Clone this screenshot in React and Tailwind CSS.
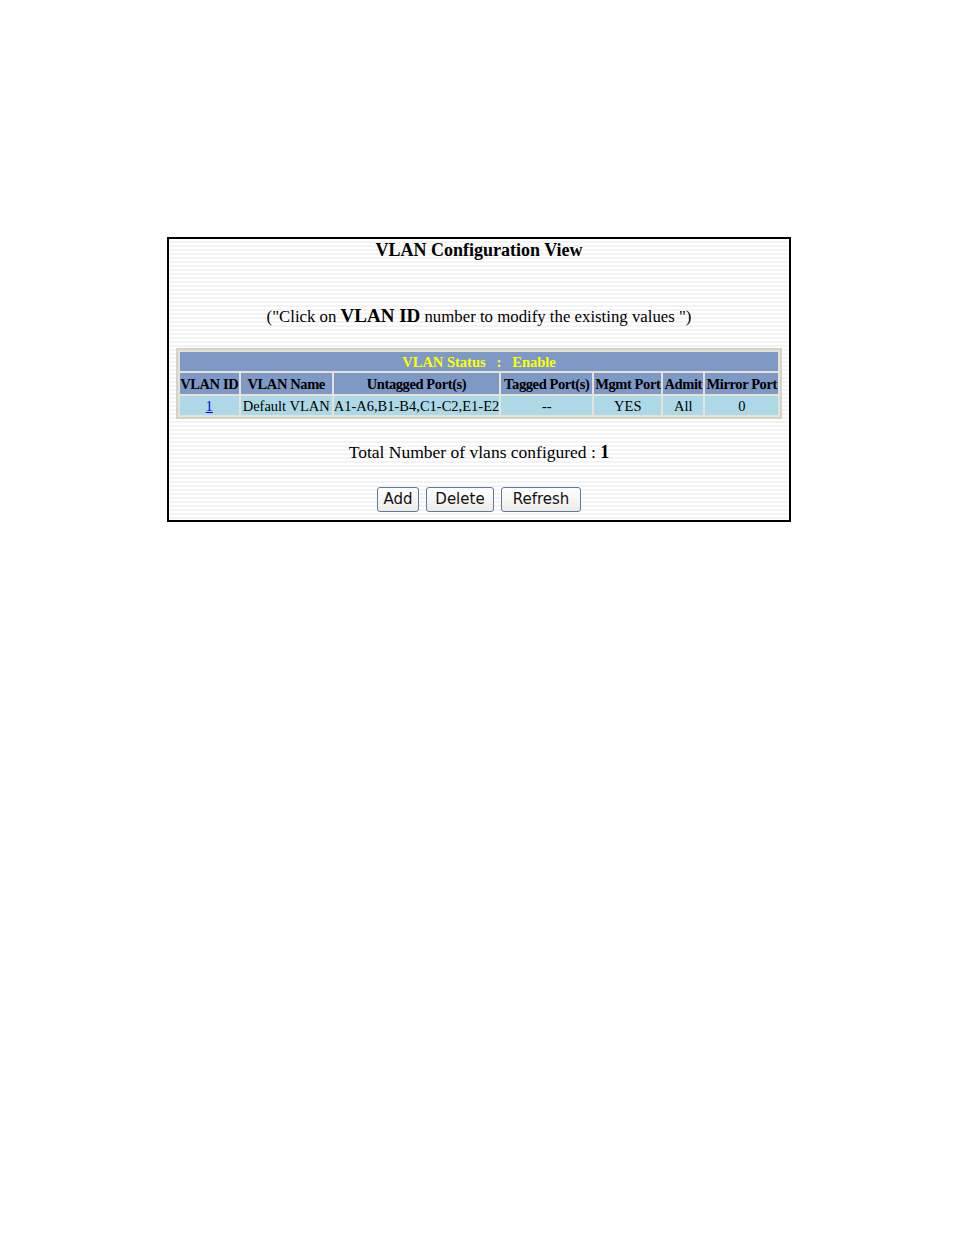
import React from "react";

const cols = [
  { name: "VLAN ID", w: "w-[59px]" },
  { name: "VLAN Name", w: "w-[91px]" },
  { name: "Untagged Port(s)", w: "w-[164px]" },
  { name: "Tagged Port(s)", w: "w-[91px]" },
  { name: "Mgmt Port", w: "w-[67px]" },
  { name: "Admit", w: "w-[40px]" },
  { name: "Mirror Port", w: "w-[73px]" },
];

function Btn({ children, w }) {
  return (
    <button
      className={`h-[25px] ${w} rounded-[3px] border border-[#5b7ba3] bg-[linear-gradient(to_bottom,#ffffff,#ecebe6)] text-[15px] text-[#111] font-['DejaVu_Sans',sans-serif] leading-none`}
    >
      {children}
    </button>
  );
}

export default function App() {
  return (
    <div className="min-h-[1235px] bg-white pt-[237px] pl-[167px] font-['Liberation_Serif',serif] text-black">
      <div className="w-[624px] h-[285px] border-2 border-black bg-[repeating-linear-gradient(to_bottom,#ffffff_0px,#ffffff_2px,#f3f3f3_2px,#f3f3f3_4px)] flex flex-col items-center">
        <div className="mt-[0px] text-[18px] font-bold leading-[22px]">VLAN Configuration View</div>
        <div className="mt-[44px] text-[16.8px] leading-[22px]">
          ("Click on <b className="text-[19px]">VLAN ID</b> number to modify the existing values ")
        </div>
        <table className="mt-[20px] border-separate border-spacing-[2px] border-2 border-[#d6d2c6] bg-[#e4e2da] text-[14.5px] leading-[18px]">
          <tbody>
            <tr>
              <td colSpan={7} className="h-[19px] p-0 bg-[#7f99c6] text-center font-bold text-[#ffff00]">
                VLAN Status&nbsp;&nbsp; :&nbsp;&nbsp; Enable
              </td>
            </tr>
            <tr>
              {cols.map((c) => (
                <th key={c.name} className={`${c.w} h-[21px] bg-[#7f99c6] p-0 font-bold tracking-[-0.4px] whitespace-nowrap`}>
                  {c.name}
                </th>
              ))}
            </tr>
            <tr className="bg-[#add8e6] text-center whitespace-nowrap">
              <td className="h-[19px] p-0">
                <a href="#" className="text-[#0000ee] underline">1</a>
              </td>
              <td className="p-0">Default VLAN</td>
              <td className="p-0">A1-A6,B1-B4,C1-C2,E1-E2</td>
              <td className="p-0">--</td>
              <td className="p-0">YES</td>
              <td className="p-0">All</td>
              <td className="p-0">0</td>
            </tr>
          </tbody>
        </table>
        <div className="mt-[22px] text-[17.5px] leading-[22px]">
          Total Number of vlans configured : <b className="text-[18px]">1</b>
        </div>
        <div className="mt-[24px] flex gap-[7px]">
          <Btn w="w-[42px]">Add</Btn>
          <Btn w="w-[68px]">Delete</Btn>
          <Btn w="w-[80px]">Refresh</Btn>
        </div>
      </div>
    </div>
  );
}
